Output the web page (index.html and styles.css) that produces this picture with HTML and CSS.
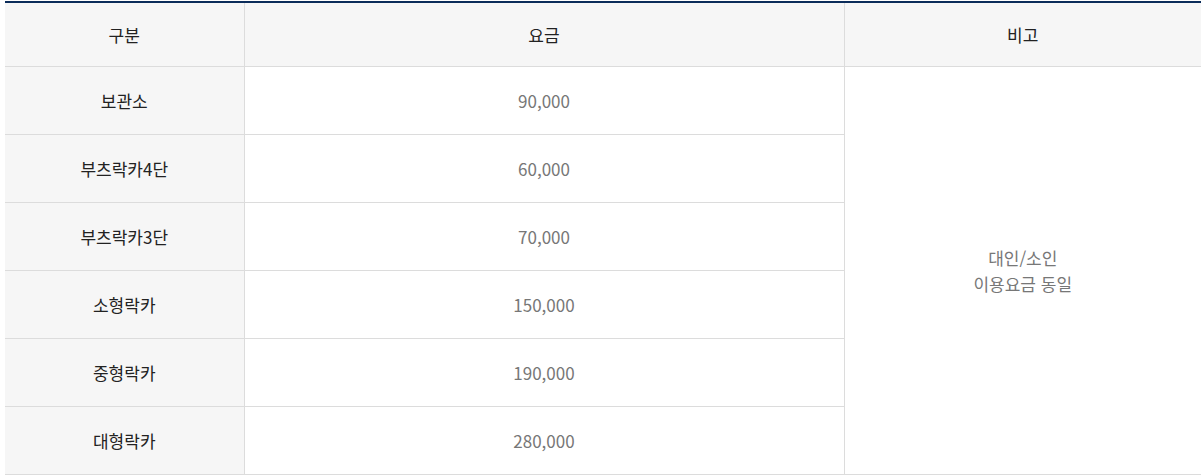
FILE: index.html
```html
<!DOCTYPE html>
<html lang="ko">
<head>
<meta charset="utf-8">
<link rel="stylesheet" href="styles.css">
</head>
<body>
<table class="fee-table">
  <colgroup>
    <col class="c1"><col class="c2"><col class="c3">
  </colgroup>
  <thead>
    <tr><th>구분</th><th>요금</th><th>비고</th></tr>
  </thead>
  <tbody>
    <tr><th>보관소</th><td>90,000</td><td class="note" rowspan="6">대인/소인<br>이용요금 동일</td></tr>
    <tr><th>부츠락카4단</th><td>60,000</td></tr>
    <tr><th>부츠락카3단</th><td>70,000</td></tr>
    <tr><th>소형락카</th><td>150,000</td></tr>
    <tr><th>중형락카</th><td>190,000</td></tr>
    <tr><th>대형락카</th><td>280,000</td></tr>
  </tbody>
</table>
</body>
</html>
```

FILE: styles.css
```css
html, body {
  margin: 0;
  padding: 0;
  background: #fff;
}
body {
  padding: 1px 0 0 5px;
  font-family: "Noto Sans CJK KR", "Noto Sans", sans-serif;
}
.fee-table {
  width: 1196px;
  border-collapse: collapse;
  table-layout: fixed;
  border-top: 2px solid #0b2c5a;
  font-size: 17px;
}
.fee-table .c1 { width: 239px; }
.fee-table .c2 { width: 600px; }
.fee-table .c3 { width: 357px; }
.fee-table th,
.fee-table td {
  border-bottom: 1px solid #dcdcdc;
  border-left: 1px solid #dcdcdc;
  text-align: center;
  vertical-align: middle;
  padding: 0;
  line-height: 26px;
}
.fee-table tr > :first-child {
  border-left: none;
}
.fee-table thead th {
  height: 63px;
  background: #f6f6f6;
  color: #222;
  font-weight: 400;
}
.fee-table tbody tr {
  height: 68px;
}
.fee-table tbody th {
  background: #f6f6f6;
  color: #222;
  font-weight: 400;
}
.fee-table tbody td {
  color: #777;
  background: #fff;
}
.fee-table .note {
  color: #777;
}
```
